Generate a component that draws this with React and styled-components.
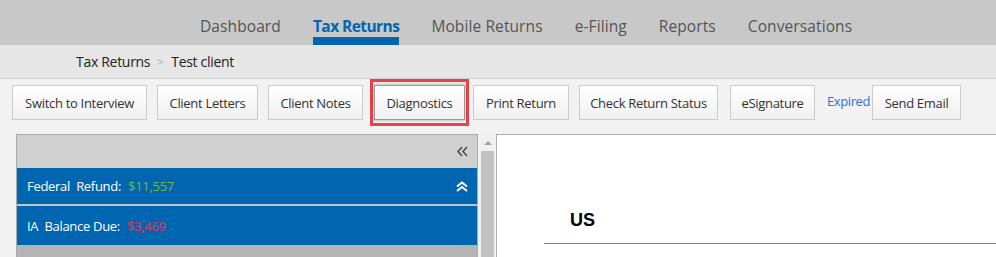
import React from "react";
import styled, { createGlobalStyle } from "styled-components";

const GlobalStyle = createGlobalStyle`
  html, body {
    margin: 0;
    padding: 0;
    background: #f2f2f2;
    font-family: "Open Sans", "Noto Sans", sans-serif;
  }
`;

const Page = styled.div`
  width: 996px;
  height: 257px;
  overflow: hidden;
  background: #f2f2f2;
`;

const TopNav = styled.div`
  height: 45px;
  background: #c8c8c8;
  display: flex;
  padding-left: 200px;
  gap: 32px;
  box-sizing: border-box;
`;

const NavItem = styled.div`
  height: 45px;
  box-sizing: border-box;
  padding-top: 15px;
  font-size: 15.5px;
  letter-spacing: ${(p) => (p.$active ? "-0.55px" : "0.1px")};
  color: ${(p) => (p.$active ? "#0066b1" : "#555")};
  font-weight: ${(p) => (p.$active ? 700 : 400)};
  border-bottom: 8px solid ${(p) => (p.$active ? "#0066b1" : "transparent")};
  white-space: nowrap;
`;

const Crumbs = styled.div`
  height: 34px;
  background: #e6e6e6;
  border-bottom: 1px solid #cfcfcf;
  display: flex;
  align-items: center;
  padding-left: 76px;
  font-size: 14px;
  letter-spacing: -0.3px;
  color: #222;
  box-sizing: border-box;
`;

const CrumbSep = styled.span`
  color: #aaa;
  font-size: 11px;
  margin: 0 8px 0 7px;
`;

const Toolbar = styled.div`
  height: 55px;
  display: flex;
  align-items: center;
  padding: 0 0 8px 12px;
  box-sizing: border-box;
`;

const Button = styled.div`
  width: ${(p) => p.$w}px;
  height: 35px;
  box-sizing: border-box;
  margin-left: ${(p) => p.$ml || 0}px;
  border: 1px solid ${(p) => (p.$focus ? "#9a9a9a" : "#cbcbcb")};
  background: linear-gradient(#ffffff, #f0f0f0);
  box-shadow: ${(p) => (p.$focus ? "0 0 3px rgba(0,0,0,0.35)" : "none")};
  display: flex;
  align-items: center;
  justify-content: center;
  font-size: 13px;
  letter-spacing: -0.3px;
  color: #333;
  white-space: nowrap;
`;

const Highlight = styled.div`
  margin-left: 7px;
  margin-right: 4px;
  border: 3px solid #e8424a;
  padding: 3px 1px;
  display: flex;
`;

const Expired = styled.span`
  margin-left: 12px;
  margin-right: 2px;
  font-size: 13px;
  letter-spacing: -0.4px;
  color: #2c6fe0;
  padding-bottom: 3px;
`;

const Body = styled.div`
  display: flex;
  padding-left: 16px;
`;

const Summary = styled.div`
  width: 462px;
  height: 123px;
  box-sizing: border-box;
  border: 1px solid #aaa;
  border-bottom: none;
  background: #b4b4b4;
  display: flex;
  flex-direction: column;
`;

const SummaryHead = styled.div`
  height: 33px;
  background: #d0d0d0;
  display: flex;
  justify-content: flex-end;
  align-items: center;
  padding-right: 9px;
`;

const Row = styled.div`
  height: ${(p) => p.$h}px;
  background: #0066b1;
  display: flex;
  align-items: center;
  justify-content: space-between;
  padding: 0 9px 0 10px;
  font-size: 13px;
  letter-spacing: -0.3px;
  color: #fff;
  white-space: pre;
`;

const Amount = styled.span`
  margin-left: 7px;
  color: ${(p) => p.$color};
`;

const Gap = styled.div`
  height: 2px;
  background: #c4c4c4;
`;

const Scroll = styled.div`
  width: 13px;
  margin-left: 3px;
  background: #f0f0f0;
  display: flex;
  flex-direction: column;
  align-items: center;
`;

const Arrow = styled.div`
  margin-top: 7px;
  width: 0;
  height: 0;
  border-left: 4px solid transparent;
  border-right: 4px solid transparent;
  border-bottom: 4px solid #a3a3a3;
`;

const Thumb = styled.div`
  margin-top: 6px;
  width: 13px;
  flex: 1;
  background: #c1c1c1;
`;

const Sheet = styled.div`
  flex: 1;
  margin-left: 2px;
  height: 123px;
  box-sizing: border-box;
  background: #fff;
  border-top: 1px solid #b0b0b0;
  border-left: 1px solid #b0b0b0;
  padding-top: 75px;
`;

const Country = styled.div`
  font-family: "Liberation Sans", Arial, sans-serif;
  font-weight: 700;
  font-size: 18px;
  color: #000;
  padding-left: 73px;
  height: 33px;
`;

const Rule = styled.div`
  margin-left: 47px;
  height: 1px;
  background: #808080;
`;

const nav = ["Dashboard", "Tax Returns", "Mobile Returns", "e-Filing", "Reports", "Conversations"];

const ChevronsLeft = () => (
  <svg width="11" height="11" viewBox="0 0 11 11">
    <path d="M5 1 L1 5.5 L5 10 M10 1 L6 5.5 L10 10" stroke="#444" strokeWidth="1.4" fill="none" />
  </svg>
);

const ChevronsUp = () => (
  <svg width="12" height="11" viewBox="0 0 12 11">
    <path d="M1 5.5 L6 1.5 L11 5.5 M1 10 L6 6 L11 10" stroke="#fff" strokeWidth="2" fill="none" />
  </svg>
);

export default function App() {
  return (
    <Page>
      <GlobalStyle />
      <TopNav>
        {nav.map((n) => (
          <NavItem key={n} $active={n === "Tax Returns"}>{n}</NavItem>
        ))}
      </TopNav>
      <Crumbs>
        Tax Returns<CrumbSep>&gt;</CrumbSep>Test client
      </Crumbs>
      <Toolbar>
        <Button $w={135}>Switch to Interview</Button>
        <Button $w={101} $ml={10}>Client Letters</Button>
        <Button $w={95} $ml={10}>Client Notes</Button>
        <Highlight>
          <Button $w={91} $focus>Diagnostics</Button>
        </Highlight>
        <Button $w={96}>Print Return</Button>
        <Button $w={139} $ml={10}>Check Return Status</Button>
        <Button $w={85} $ml={12}>eSignature</Button>
        <Expired>Expired</Expired>
        <Button $w={89}>Send Email</Button>
      </Toolbar>
      <Body>
        <Summary>
          <SummaryHead>
            <ChevronsLeft />
          </SummaryHead>
          <Row $h={36}>
            <span>
              {"Federal  Refund:"}
              <Amount $color="#74b83c">$11,557</Amount>
            </span>
            <ChevronsUp />
          </Row>
          <Gap />
          <Row $h={39}>
            <span>
              {"IA  Balance Due:"}
              <Amount $color="#e8345a">$3,469</Amount>
            </span>
          </Row>
        </Summary>
        <Scroll>
          <Arrow />
          <Thumb />
        </Scroll>
        <Sheet>
          <Country>US</Country>
          <Rule />
        </Sheet>
      </Body>
    </Page>
  );
}
